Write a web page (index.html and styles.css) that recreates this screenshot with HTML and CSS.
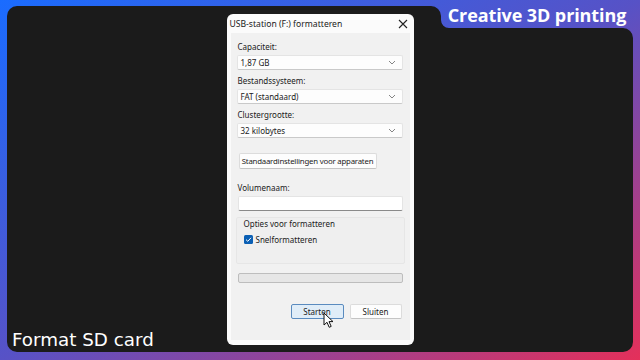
FILE: index.html
```html
<!DOCTYPE html>
<html lang="nl">
<head>
    <meta charset="UTF-8">
    <title>Format SD card</title>
    <link rel="stylesheet" href="styles.css">
</head>
<body>
    <div class="tag">Creative 3D printing</div>
    <div class="screen">
        <div class="dialog">
            <div class="titlebar">
                <span>USB-station (F:) formatteren</span>
                <svg class="close" width="10" height="10" viewBox="0 0 10 10">
                    <path d="M1 1 L9 9 M9 1 L1 9" stroke="#222" stroke-width="1.1"/>
                </svg>
            </div>
            <div class="content">
                <div class="label">Capaciteit:</div>
                <div class="select">
                    <span>1,87 GB</span>
                    <svg width="8" height="5" viewBox="0 0 8 5"><path d="M1 1 L4 4 L7 1" fill="none" stroke="#777" stroke-width="0.9"/></svg>
                </div>
                <div class="label">Bestandssysteem:</div>
                <div class="select">
                    <span>FAT (standaard)</span>
                    <svg width="8" height="5" viewBox="0 0 8 5"><path d="M1 1 L4 4 L7 1" fill="none" stroke="#777" stroke-width="0.9"/></svg>
                </div>
                <div class="label">Clustergrootte:</div>
                <div class="select">
                    <span>32 kilobytes</span>
                    <svg width="8" height="5" viewBox="0 0 8 5"><path d="M1 1 L4 4 L7 1" fill="none" stroke="#777" stroke-width="0.9"/></svg>
                </div>
                <div class="btn defaults">Standaardinstellingen voor apparaten</div>
                <div class="label vol">Volumenaam:</div>
                <div class="input"></div>
                <div class="group">
                    <div class="group-title">Opties voor formatteren</div>
                    <div class="check">
                        <svg width="9" height="9" viewBox="0 0 9 9">
                            <rect width="9" height="9" rx="1.5" fill="#0a5fb4"/>
                            <path d="M2 4.6 L3.8 6.3 L7 2.8" fill="none" stroke="#fff" stroke-width="1"/>
                        </svg>
                        <span>Snelformatteren</span>
                    </div>
                </div>
                <div class="progress"></div>
                <div class="actions">
                    <div class="btn primary">Starten</div>
                    <div class="btn">Sluiten</div>
                </div>
            </div>
            <svg class="cursor" width="12" height="17" viewBox="0 0 12 17">
                <path d="M1 1 L1 13 L4 10.3 L6.2 15.3 L8.2 14.4 L6 9.6 L10 9.6 Z" fill="#fff" stroke="#111" stroke-width="1"/>
            </svg>
        </div>
        <div class="caption">Format SD card</div>
    </div>
</body>
</html>
```

FILE: styles.css
```css
body {
    margin: 0;
    width: 640px;
    height: 360px;
    padding: 6px 7px 8px 7px;
    box-sizing: border-box;
    background: linear-gradient(to bottom right, #1a6cff 0%, #5752c6 50%, #e4305a 100%) fixed;
    overflow: hidden;
}

.screen {
    position: relative;
    width: 626px;
    height: 346px;
    background-color: #1b1b1b;
    clip-path: path('M10,0 H424 A10,10 0 0 1 434,10 V14 A8,8 0 0 0 442,22 H616 A10,10 0 0 1 626,32 V336 A10,10 0 0 1 616,346 H10 A10,10 0 0 1 0,336 V10 A10,10 0 0 1 10,0 Z');
    padding-top: 8px;
    box-sizing: border-box;
}

.tag {
    position: absolute;
    top: 0;
    left: 441px;
    width: 192px;
    height: 29px;
    line-height: 30px;
    text-align: center;
    color: #fff;
    font-family: "Open Sans", sans-serif;
    font-weight: 700;
    font-size: 18px;
    letter-spacing: -0.1px;
}

.caption {
    position: absolute;
    left: 5px;
    bottom: 2px;
    color: #fff;
    font-family: "DejaVu Sans", sans-serif;
    font-size: 18.3px;
}

.dialog {
    position: relative;
    width: 187px;
    height: 331px;
    margin: 0 auto;
    background-color: #fbfbfb;
    border-radius: 6px;
    font-family: "Noto Sans", sans-serif;
    font-size: 8px;
    color: #1a1a1a;
    display: flex;
    flex-direction: column;
}

.titlebar {
    height: 19px;
    display: flex;
    align-items: center;
    justify-content: space-between;
    padding: 0 6px 0 3px;
    font-size: 8.6px;
}

.content {
    flex: 1;
    margin: 0 4px 5px 4px;
    background-color: #f1f1f1;
    padding: 8px 7px 0 6px;
}

.label {
    height: 12px;
    line-height: 12px;
    padding-left: 1px;
    margin-bottom: 2px;
}

.select {
    height: 15px;
    box-sizing: border-box;
    background-color: #fdfdfd;
    border: 1px solid #e4e4e4;
    border-bottom-color: #c9c9c9;
    border-radius: 2px;
    display: flex;
    align-items: center;
    justify-content: space-between;
    padding: 0 6px 0 3px;
    margin-bottom: 5px;
}

.btn {
    height: 16px;
    box-sizing: border-box;
    background-color: #fdfdfd;
    border: 1px solid #dcdcdc;
    border-bottom-color: #c4c4c4;
    border-radius: 2px;
    display: flex;
    align-items: center;
    justify-content: center;
    white-space: nowrap;
}

.defaults {
    width: 138px;
    margin: 15px 0 13px 2px;
    font-size: 7.8px;
    letter-spacing: -0.2px;
}

.vol {
    margin-bottom: 2px;
}

.input {
    height: 15px;
    box-sizing: border-box;
    background-color: #fff;
    border: 1px solid #e4e4e4;
    border-bottom: 1px solid #8a8a8a;
    border-radius: 2px;
    margin: 0 0 6px 1px;
}

.group {
    height: 47px;
    box-sizing: border-box;
    border: 1px solid #e6e6e6;
    border-radius: 2px;
    background-color: #efefef;
    margin: 0 -2px 0 -1px;
    padding: 0 7px;
}

.group-title {
    height: 12px;
    line-height: 12px;
    margin-bottom: 4px;
}

.check {
    display: flex;
    align-items: center;
    gap: 3px;
}

.check svg {
    display: block;
}

.progress {
    height: 10px;
    box-sizing: border-box;
    background-color: #e6e6e6;
    border: 1px solid #bdbdbd;
    border-radius: 2px;
    margin: 9px 0 0 1px;
}

.actions {
    display: flex;
    justify-content: flex-end;
    gap: 6px;
    margin: 21px 1px 0 0;
}

.actions .btn {
    width: 52px;
    height: 15px;
}

.actions .primary {
    width: 53px;
    background-color: #e0edf8;
    border: 1px solid #5a8bbf;
}

.cursor {
    position: absolute;
    left: 96px;
    top: 298px;
}
```
